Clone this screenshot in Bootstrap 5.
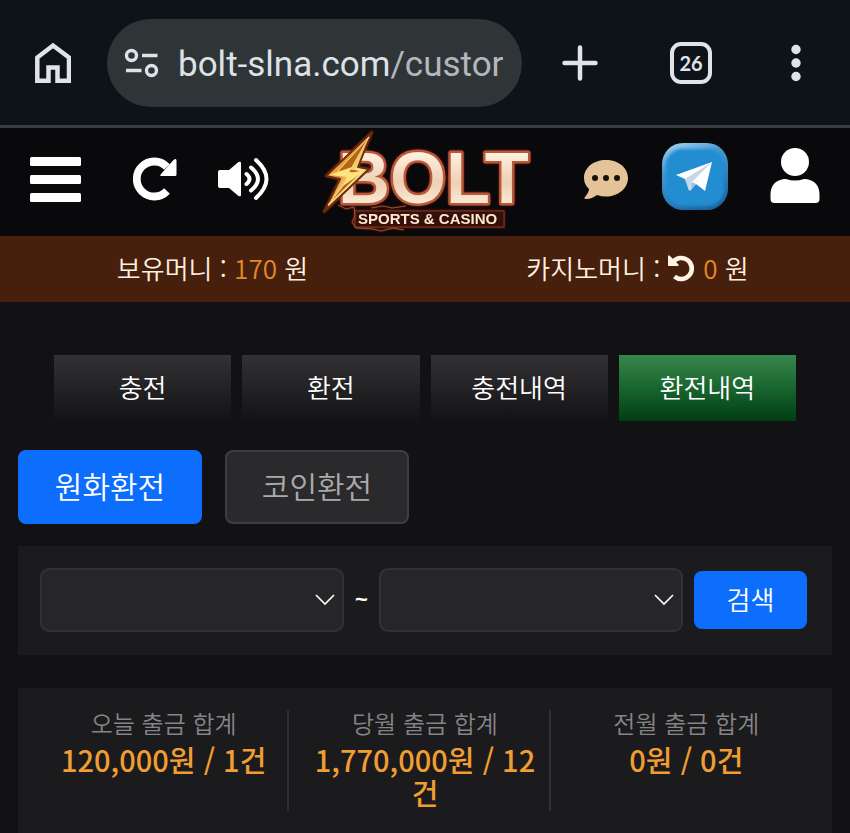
<!DOCTYPE html>
<html lang="ko" data-bs-theme="dark">
<head>
<meta charset="utf-8">
<meta name="viewport" content="width=device-width, initial-scale=1">
<title>BOLT 환전내역</title>
<link href="https://cdn.jsdelivr.net/npm/bootstrap@5.3.0/dist/css/bootstrap.min.css" rel="stylesheet">
<style>
body{background:#121113;color:#fff;font-family:"Noto Sans CJK KR",sans-serif;font-weight:350;font-size:26px;line-height:36px}
svg{display:block}
.plain{background:none;border:0;padding:0;color:inherit}
.browser-bar{background:#0e1219;border-bottom:3px solid #383b42;padding:19px 42px 18px 35px;color:#e0e4ea}
.url-pill{height:88px;min-width:0;border-radius:44px;background:#2f3437;margin:0 40px 0 36px;padding:0 17px;gap:18px;color:#dde1e8}
.url-text{font:400 35px/44px Roboto,sans-serif;overflow:hidden;white-space:nowrap;padding-top:3px}
.url-path{color:#b3b7bd}
.tools{gap:72px}
.tab-count{width:42px;height:42px;border:4px solid #e0e4ea;border-radius:11px;font:700 20px/34px Lato,sans-serif}
.more-btn{width:24px}
.site-head{background:#09080b;padding:0 30px 6px;height:108px}
.brand svg{filter:drop-shadow(0 0 1px #8c2416)}
.menu-btn{width:62px}
.head-left{gap:41px}
.head-right{gap:33px}
.user-btn{width:59px}
.money{background:#471f0d;padding:14px 0 16px;color:#fff1e0}
.amount{color:#e58a22}
.tabs{padding:53px 54px 0;gap:11px}
.tab-btn{flex:1 1 0;height:66px;border:0;border-radius:0;padding:0 0 2px;font-size:26px;font-weight:350;line-height:36px;color:#fff;background:linear-gradient(#333134,#131214)}
.tab-btn.on{background:linear-gradient(#37864a,#19652f 50%,#003d13)}
.main-area{padding:29px 18px 0}
.kind{gap:23px}
.kind-btn{width:184px;height:74px;border-radius:8px;font-size:30px;font-weight:350;padding:0 0 4px}
.kind-off{background:#2a292b;border:2px solid #3e3d3f;color:#aaa9ab}
.blue{background:#0d6efd;color:#fff;border:0}
.panel-box{background:#1b1a1c}
.search{margin-top:22px;padding:22px 25px 23px 22px;gap:11px}
.date-select{flex:1 1 0;min-width:0;height:64px;border:2px solid #323133;border-radius:9px;background-color:#262527;
background-image:url("data:image/svg+xml,%3Csvg xmlns='http://www.w3.org/2000/svg' viewBox='0 0 20 12'%3E%3Cpath fill='none' stroke='white' stroke-width='1.6' d='M1 1l9 9 9-9'/%3E%3C/svg%3E");background-size:20px 12px;background-position:right 7px center}
.tilde{width:13px;text-align:center;font:700 22px/30px "Liberation Sans",sans-serif}
.search-btn{width:113px;height:58px;border-radius:8px;font-size:26px;font-weight:350;padding:0 0 4px}
.stats{margin-top:33px;padding:22px;gap:12px}
.stat{flex:1 1 0;padding:0 8px;text-align:center}
.stat:not(:last-child){border-right:2px solid #303032}
.stat dt{font-size:24px;font-weight:350;line-height:26px;color:#858487}
.stat dd{margin:7px 0 2px;font-size:29px;line-height:33px;font-weight:500;color:#f09d32}
</style>
<script src="https://cdn.jsdelivr.net/npm/bootstrap@5.3.0/dist/js/bootstrap.bundle.min.js"></script>
</head>
<body class="d-flex flex-column min-vh-100">
<div class="browser-bar d-flex align-items-center">
  <button class="plain" aria-label="홈"><svg width="36" height="42" viewBox="0 0 36 42" fill="none" stroke="currentColor" stroke-width="4.5"><path d="M2.3 38.7V15.5L18 3.5l16 12v23.2H22.5V25.5h-9v13.200z"/></svg></button>
  <div class="url-pill d-flex align-items-center flex-grow-1">
    <svg class="flex-shrink-0" width="36" height="30" viewBox="0 0 36 30" fill="none" stroke="currentColor" stroke-width="3.4"><circle cx="7.500" cy="7.500" r="5"/><path d="M18 7.500h15.500M2 22.500h15.500"/><circle cx="27.500" cy="22.500" r="5"/></svg>
    <button class="plain url-text text-start flex-grow-1">bolt-slna.com<span class="url-path">/custor</span></button>
  </div>
  <div class="tools d-flex align-items-center">
    <button class="plain" aria-label="새 탭"><svg width="36" height="36" viewBox="0 0 36 36" stroke="currentColor" stroke-width="4.500" stroke-linecap="round"><path d="M18 2.500v31M2.500 18h31"/></svg></button>
    <button class="plain tab-count" aria-label="탭 26개">26</button>
    <button class="plain more-btn" aria-label="더보기"><svg class="mx-auto" width="10" height="38" viewBox="0 0 10 38" fill="currentColor"><circle cx="5" cy="5.500" r="4.700"/><circle cx="5" cy="19" r="4.700"/><circle cx="5" cy="32.500" r="4.700"/></svg></button>
  </div>
</div>
<header class="site-head d-flex align-items-center justify-content-between">
  <div class="head-left d-flex align-items-center">
    <button class="plain menu-btn" aria-label="메뉴"><svg width="51" height="45" viewBox="0 0 51 45" fill="#fff"><rect width="51" height="9" rx="1.500"/><rect y="18" width="51" height="9" rx="1.500"/><rect y="36" width="51" height="9" rx="1.500"/></svg></button>
    <button class="plain" aria-label="새로고침"><svg width="44" height="44" viewBox="0 0 44 44"><path d="M34 34A17.500 17.500 0 1 1 34 10" fill="none" stroke="#fff" stroke-width="7.800"/><path d="M40.500 3q3-2.500 3 1v13.500q0 1.500-1.500 1.500H29q-3 0-1-2z" fill="#fff"/></svg></button>
    <button class="plain" aria-label="소리"><svg width="51" height="44" viewBox="0 0 51 44" fill="none" stroke="#fff" stroke-linecap="round" stroke-width="4"><path d="M2 13h9L20.500 5q2.500-1 2.500 1v32q0 2-2.500 1L11 31H2q-2 0-2-2V15q0-2 2-2z" fill="#fff" stroke="none"/><path d="M28.500 17q6 5 0 10M33 10.500q14 11.500 0 23M38 3q21 19 0 38"/></svg></button>
  </div>
  <a href="#" class="brand" aria-label="BOLT SPORTS &amp; CASINO"><svg width="212" height="106" viewBox="319 127 212 106">
    <defs>
      <linearGradient id="cream" x1="0" y1="0" x2="0" y2="1"><stop offset=".15" stop-color="#fff4e4"/><stop offset=".55" stop-color="#eed0b4"/><stop offset=".9" stop-color="#fff0dc"/></linearGradient>
      <linearGradient id="gold" x1="0" y1="0" x2="1" y2="1"><stop stop-color="#ffd074"/><stop offset=".45" stop-color="#e39a35"/><stop offset=".6" stop-color="#fff09a"/><stop offset="1" stop-color="#8f3e0d"/></linearGradient>
    </defs>
    <g font-family="Liberation Sans, Arial, sans-serif" font-weight="700">
      <text x="337" y="204" font-size="72" fill="url(#cream)" stroke="#b9573a" stroke-width="5" stroke-linejoin="round" paint-order="stroke">BOLT</text>
      <rect x="354" y="212" width="149" height="16" fill="#351009" stroke="#8c3322"/>
      <text x="357" y="225" font-size="15" fill="#ffe6d0">SPORTS &amp; CASINO</text>
    </g>
    <path d="M371 133L325 177l14 3-16 33 45-43-11-2z" fill="url(#gold)" stroke="#6b2c0b" stroke-width="2" stroke-linejoin="round"/>
    <path d="M368 138l-31 34 15 2-25 32 35-34-12-2z" fill="#b2661c" stroke="#ffdf86" stroke-width="1"/>
    <path d="M328 176l23-8-3 6 17-3-23 16 4-9z" fill="#ffe27b"/>
    <path d="M337 206l8 4 8-2 1 9-3 6 4 6 17 1 8 2 12-3 11 2M370 209l12-2 9 2 14-2" fill="none" stroke="#9b522b" stroke-width="1"/>
  </svg></a>
  <div class="head-right d-flex align-items-center">
    <button class="plain" aria-label="채팅"><svg width="46" height="40" viewBox="0 0 46 40"><path d="M23 1C10 1 1 9 1 19c0 5 2 8 5 11 0 3-2 5-4 8-1 1-1 2 1 2 5 0 8-2 11-4 3 1 6 1.500 9 1.500 12 0 22-8 22-18.500S35 1 23 1z" fill="#e3c397"/><circle cx="12" cy="19" r="3" fill="#17110c"/><circle cx="23" cy="19" r="3" fill="#17110c"/><circle cx="34" cy="19" r="3" fill="#17110c"/></svg></button>
    <button class="plain" aria-label="텔레그램"><svg width="66" height="72" viewBox="0 0 66 72"><defs><linearGradient id="rim" x1=".2" y1="0" x2=".6" y2="1"><stop stop-color="#9dcdee"/><stop offset=".3" stop-color="#469bd5"/><stop offset="1" stop-color="#1a65a4"/></linearGradient><filter id="soft"><feGaussianBlur stdDeviation="1.500"/></filter></defs><rect width="66" height="67" rx="21" fill="url(#rim)"/><rect x="4" y="6" width="58" height="57" rx="16" fill="#218dd1" filter="url(#soft)"/><path d="M14 32l36-13-7 29-9-7-6 7-5-12z" fill="#fff"/><path d="M23 36l27-17-20 20-3 9z" fill="#c6d7ea"/><path d="M30 39l4 2-6 7z" fill="#a3bed8"/></svg></button>
    <button class="plain user-btn" aria-label="내 정보"><svg class="ms-auto" width="50" height="70" viewBox="0 0 50 70" fill="#fff"><circle cx="25" cy="18" r="14"/><path d="M14 35h2q9 3 18 0h2q13 2 13.500 15v5q0 4-4 4h-41q-4 0-4-4v-5Q1 37 14 35z"/></svg></button>
  </div>
</header>
<div class="money d-flex text-center">
  <div class="flex-fill w-50">보유머니 : <span class="amount">170</span> 원</div>
  <div class="flex-fill w-50 d-flex justify-content-center align-items-center gap-2"><span>카지노머니 :</span><button class="plain" aria-label="카지노머니 새로고침"><svg width="27" height="27" viewBox="0 0 27 27"><path d="M5 7a10.500 10.500 0 1 1 1.500 14.500" fill="none" stroke="#fff4e5" stroke-width="4.600"/><path d="M0 2q0-3 2-1l8 8q2 2-1 2H1q-1 0-1-1z" fill="#fff4e5"/></svg></button><span><span class="amount">0</span> 원</span></div>
</div>
<nav class="tabs d-flex">
  <button class="btn tab-btn">충전</button>
  <button class="btn tab-btn">환전</button>
  <button class="btn tab-btn">충전내역</button>
  <button class="btn tab-btn on" aria-current="page">환전내역</button>
</nav>
<main class="main-area d-flex flex-column flex-grow-1">
  <div class="kind d-flex">
    <button class="btn kind-btn blue">원화환전</button>
    <button class="btn kind-btn kind-off">코인환전</button>
  </div>
  <form class="panel-box search d-flex align-items-center">
    <select class="form-select date-select" aria-label="시작일"><option></option></select>
    <span class="tilde">~</span>
    <select class="form-select date-select" aria-label="종료일"><option></option></select>
    <button type="button" class="btn search-btn blue">검색</button>
  </form>
  <section class="panel-box stats d-flex flex-grow-1 align-items-start">
    <dl class="stat mb-0 align-self-stretch"><dt>오늘 출금 합계</dt><dd>120,000원 / 1건</dd></dl>
    <dl class="stat mb-0 align-self-stretch"><dt>당월 출금 합계</dt><dd>1,770,000원 / 12건</dd></dl>
    <dl class="stat mb-0 align-self-stretch"><dt>전월 출금 합계</dt><dd>0원 / 0건</dd></dl>
  </section>
</main>
</body>
</html>
